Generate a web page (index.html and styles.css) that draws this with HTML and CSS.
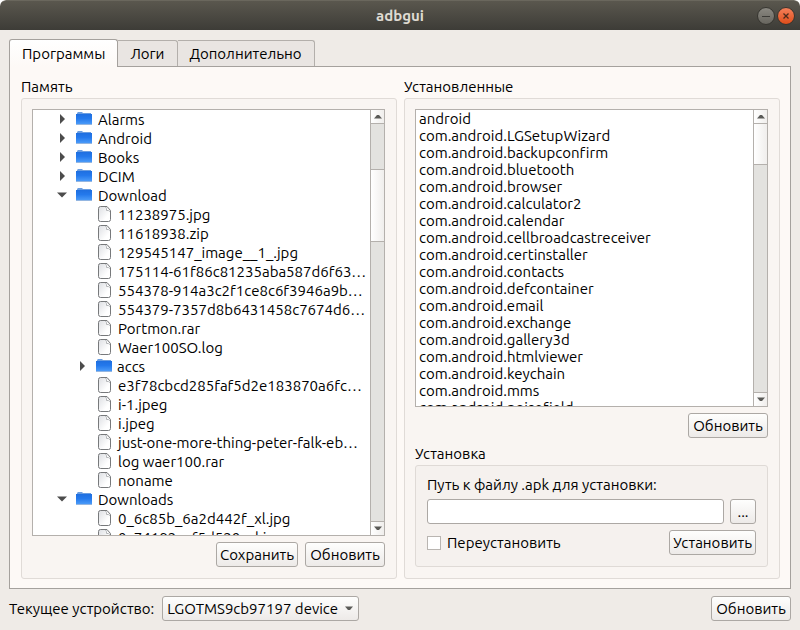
FILE: index.html
```
<!DOCTYPE html>
<html lang="ru">
<head>
<meta charset="utf-8">
<title>adbgui</title>
<link rel="stylesheet" href="styles.css">
</head>
<body>
<svg class="defs" aria-hidden="true">
  <defs>
    <linearGradient id="folder-fill" x1="0" y1="0" x2="0" y2="1"><stop offset="0" stop-color="#1f6fe0"/><stop offset=".45" stop-color="#2479ec"/><stop offset="1" stop-color="#4a9af8"/></linearGradient>
    <linearGradient id="file-fill" x1="0" y1="0" x2="1" y2="1"><stop offset="0" stop-color="#dcdee2"/><stop offset=".7" stop-color="#fff"/></linearGradient>
    <linearGradient id="close-fill" x1="0" y1="0" x2="0" y2="1"><stop offset="0" stop-color="#f4815c"/><stop offset="1" stop-color="#df4c18"/></linearGradient>
    <linearGradient id="min-fill" x1="0" y1="0" x2="0" y2="1"><stop offset="0" stop-color="#8b8982"/><stop offset="1" stop-color="#66645d"/></linearGradient>
    <symbol id="folder" viewBox="0 0 16 16"><path d="M1 3V2L2 1h4l1 1h8v1z" fill="#6a9de0"/><rect y="3" width="16" height="10" fill="url(#folder-fill)"/><path d="M0 13.500h16" stroke="#2b6fc4" opacity=".5"/></symbol>
    <symbol id="file" viewBox="0 0 16 16"><path d="M3.500.5h6.500l3.500 4v9q0 2-2 2h-8q-2 0-2-2v-11q0-2 2-2z" fill="url(#file-fill)" stroke="#77797b"/><path d="M8.500 1q1.500 1.500 1 3.500 2-.5 3.500 1" fill="#fff" stroke="#b4b6b9"/></symbol>
    <symbol id="closed" viewBox="0 0 10 10"><path d="M3 0v10l5-5z" fill="#4c4c4c"/></symbol>
    <symbol id="open" viewBox="0 0 10 10"><path d="M0 2.500h10L5 7.500z" fill="#4c4c4c"/></symbol>
    <symbol id="up" viewBox="0 0 8 5"><path d="M0 4.500 3 1h2l3 3.500z" fill="#5a5a57"/></symbol>
    <symbol id="down" viewBox="0 0 8 5"><path d="M0 .5 3 4h2l3-3.500z" fill="#5a5a57"/></symbol>
  </defs>
</svg>

<header class="titlebar">
  <h1>adbgui</h1>
  <div class="window-buttons">
    <button type="button" aria-label="Свернуть"><svg viewBox="0 0 18 18"><circle cx="9" cy="9" r="8.500" fill="url(#min-fill)" stroke="#35342f"/><path d="M5 9.500h8" stroke="#3c3b37"/></svg></button>
    <button type="button" aria-label="Закрыть"><svg viewBox="0 0 18 18"><circle cx="9" cy="9" r="8.500" fill="url(#close-fill)" stroke="#35342f"/><path d="m6.500 6.500 5 5m0-5-5 5" stroke="#4a2a1c" stroke-width="1.300"/></svg></button>
  </div>
</header>

<main class="content">
  <div class="tabs" role="tablist">
    <button type="button" class="tab active" role="tab" aria-selected="true">Программы</button>
    <button type="button" class="tab" role="tab" aria-selected="false">Логи</button>
    <button type="button" class="tab" role="tab" aria-selected="false">Дополнительно</button>
  </div>

  <div class="pane" role="tabpanel">
    <section class="group">
      <h2>Память</h2>
      <div class="box">
        <div class="view">
          <ul class="tree">
            <li><svg class="arrow"><use href="#closed"/></svg><svg class="icon"><use href="#folder"/></svg><span>Alarms</span></li>
            <li><svg class="arrow"><use href="#closed"/></svg><svg class="icon"><use href="#folder"/></svg><span>Android</span></li>
            <li><svg class="arrow"><use href="#closed"/></svg><svg class="icon"><use href="#folder"/></svg><span>Books</span></li>
            <li><svg class="arrow"><use href="#closed"/></svg><svg class="icon"><use href="#folder"/></svg><span>DCIM</span></li>
            <li><svg class="arrow"><use href="#open"/></svg><svg class="icon"><use href="#folder"/></svg><span>Download</span></li>
            <li class="child"><svg class="icon"><use href="#file"/></svg><span>11238975.jpg</span></li>
            <li class="child"><svg class="icon"><use href="#file"/></svg><span>11618938.zip</span></li>
            <li class="child"><svg class="icon"><use href="#file"/></svg><span>129545147_image__1_.jpg</span></li>
            <li class="child"><svg class="icon"><use href="#file"/></svg><span>175114-61f86c81235aba587d6f63…</span></li>
            <li class="child"><svg class="icon"><use href="#file"/></svg><span>554378-914a3c2f1ce8c6f3946a9b…</span></li>
            <li class="child"><svg class="icon"><use href="#file"/></svg><span>554379-7357d8b6431458c7674d6…</span></li>
            <li class="child"><svg class="icon"><use href="#file"/></svg><span>Portmon.rar</span></li>
            <li class="child"><svg class="icon"><use href="#file"/></svg><span>Waer100SO.log</span></li>
            <li class="child folder"><svg class="arrow"><use href="#closed"/></svg><svg class="icon"><use href="#folder"/></svg><span>accs</span></li>
            <li class="child"><svg class="icon"><use href="#file"/></svg><span>e3f78cbcd285faf5d2e183870a6fc…</span></li>
            <li class="child"><svg class="icon"><use href="#file"/></svg><span>i-1.jpeg</span></li>
            <li class="child"><svg class="icon"><use href="#file"/></svg><span>i.jpeg</span></li>
            <li class="child"><svg class="icon"><use href="#file"/></svg><span>just-one-more-thing-peter-falk-eb…</span></li>
            <li class="child"><svg class="icon"><use href="#file"/></svg><span>log waer100.rar</span></li>
            <li class="child"><svg class="icon"><use href="#file"/></svg><span>noname</span></li>
            <li><svg class="arrow"><use href="#open"/></svg><svg class="icon"><use href="#folder"/></svg><span>Downloads</span></li>
            <li class="child"><svg class="icon"><use href="#file"/></svg><span>0_6c85b_6a2d442f_xl.jpg</span></li>
            <li class="child"><svg class="icon"><use href="#file"/></svg><span>0_74182_ef5d520_xl.jpg</span></li>
          </ul>
          <div class="scrollbar tree-scroll">
            <button type="button" aria-label="Вверх"><svg><use href="#up"/></svg></button>
            <div class="before"></div><div class="thumb"></div><div class="after"></div>
            <button type="button" aria-label="Вниз"><svg><use href="#down"/></svg></button>
          </div>
        </div>
        <div class="actions">
          <button type="button" class="btn">Сохранить</button>
          <button type="button" class="btn">Обновить</button>
        </div>
      </div>
    </section>

    <section class="group">
      <h2>Установленные</h2>
      <div class="box">
        <div class="view">
          <ul class="packages">
            <li>android</li>
            <li>com.android.LGSetupWizard</li>
            <li>com.android.backupconfirm</li>
            <li>com.android.bluetooth</li>
            <li>com.android.browser</li>
            <li>com.android.calculator2</li>
            <li>com.android.calendar</li>
            <li>com.android.cellbroadcastreceiver</li>
            <li>com.android.certinstaller</li>
            <li>com.android.contacts</li>
            <li>com.android.defcontainer</li>
            <li>com.android.email</li>
            <li>com.android.exchange</li>
            <li>com.android.gallery3d</li>
            <li>com.android.htmlviewer</li>
            <li>com.android.keychain</li>
            <li>com.android.mms</li>
            <li>com.android.noisefield</li>
          </ul>
          <div class="scrollbar package-scroll">
            <button type="button" aria-label="Вверх"><svg><use href="#up"/></svg></button>
            <div class="thumb"></div><div class="after"></div>
            <button type="button" aria-label="Вниз"><svg><use href="#down"/></svg></button>
          </div>
        </div>
        <div class="actions">
          <button type="button" class="btn">Обновить</button>
        </div>
        <section class="install">
          <h2>Установка</h2>
          <form class="install-box">
            <label for="apk">Путь к файлу .apk для установки:</label>
            <div class="row">
              <input type="text" id="apk" class="path">
              <button type="button" class="btn browse">...</button>
            </div>
            <div class="row">
              <input type="checkbox" id="reinstall" class="check">
              <label for="reinstall" class="check-label">Переустановить</label>
              <button type="button" class="btn">Установить</button>
            </div>
          </form>
        </section>
      </div>
    </section>
  </div>
</main>

<footer class="device-bar">
  <label for="device">Текущее устройство:</label>
  <div class="select">
    <select id="device"><option>LGOTMS9cb97197 device</option></select>
    <svg aria-hidden="true"><use href="#down"/></svg>
  </div>
  <button type="button" class="btn">Обновить</button>
</footer>
</body>
</html>
```
FILE: styles.css
```
* { box-sizing: border-box; }

html { background: #fff; }

body {
  margin: 0;
  height: 100vh;
  display: flex;
  flex-direction: column;
  background: #efebe7;
  border-radius: 6px 6px 0 0;
  color: #000;
  font: 15px/17px Ubuntu, "Noto Sans", sans-serif;
  font-variant-ligatures: none;
}

button, input, select { font: inherit; color: inherit; margin: 0; }
h1, h2, ul { margin: 0; padding: 0; font-size: inherit; }
h2 { font-weight: normal; }
ul { list-style: none; }

.defs { position: absolute; width: 0; height: 0; }

.titlebar {
  flex: none;
  height: 30px;
  display: grid;
  grid-template-columns: 1fr auto 1fr;
  align-items: center;
  padding: 0 5px;
  background: linear-gradient(#5a574e, #3d3c37);
  border-top: 1px solid #6a675d;
  border-radius: 6px 6px 0 0;
  color: #dfdbd2;
}
.titlebar h1 { grid-column: 2; font-weight: bold; }
.window-buttons { display: flex; justify-content: flex-end; gap: 2px; }
.window-buttons button {
  width: 18px;
  height: 18px;
  padding: 0;
  border: 0;
  background: none;
}
.window-buttons svg { display: block; width: 18px; height: 18px; }

.content {
  flex: 1;
  min-height: 0;
  display: flex;
  flex-direction: column;
  padding: 9px 9px 0;
}

.tabs { display: flex; align-items: flex-end; }
.tab {
  height: 26px;
  padding: 0 12px;
  border: 1px solid #b3afab;
  border-left-width: 0;
  border-bottom: 0;
  border-radius: 0 3px 0 0;
  background: #e9e5e2;
}
.tab.active {
  position: relative;
  height: 28px;
  margin-bottom: -1px;
  border-left-width: 1px;
  border-color: #a5a19d;
  border-radius: 3px 3px 0 0;
  background: linear-gradient(#fff, #fdf9f6);
}

.pane {
  flex: 1;
  min-height: 0;
  display: grid;
  grid-template-columns: minmax(0, 1fr) minmax(0, 1fr);
  gap: 7px;
  padding: 11px 10px 9px 11px;
  border: 1px solid #a5a19d;
  background: #fdf9f6;
}

.group { display: flex; flex-direction: column; min-height: 0; }
.group h2 { height: 20px; }
.box {
  flex: 1;
  min-height: 0;
  display: flex;
  flex-direction: column;
  padding: 10px 11px 11px 10px;
  border: 1px solid #e0dbd7;
  border-radius: 3px;
  background: #f9f5f2;
}

.view {
  flex: 1 1 0;
  min-height: 0;
  display: flex;
  border: 1px solid #b4b0ac;
  background: #fff;
  overflow: hidden;
}
.view ul { flex: 1; min-width: 0; overflow: hidden; white-space: nowrap; }

.tree li {
  display: flex;
  align-items: center;
  height: 19px;
  padding-left: 24px;
}
.tree .child { padding-left: 64px; }
.tree .folder { padding-left: 44px; }
.tree .arrow { flex: none; width: 10px; height: 10px; margin: 0 9px 1px 0; }
.tree .icon { flex: none; width: 16px; height: 16px; margin: 0 6px 1px 0; }
.tree .child .icon { margin-right: 5px; }

.packages li { height: 17px; padding-left: 3px; }

.scrollbar {
  flex: none;
  width: 14px;
  display: flex;
  flex-direction: column;
  border-left: 1px solid #b4b0ac;
  background: #e3e2df;
}
.scrollbar button {
  flex: none;
  display: grid;
  place-items: center;
  height: 14px;
  padding: 0;
  border: 0 solid #b4b0ac;
  background: linear-gradient(90deg, #fff, #f0eeec);
}
.scrollbar button:first-child { border-bottom-width: 1px; }
.scrollbar button:last-child { border-top-width: 1px; }
.scrollbar svg { width: 8px; height: 5px; }
.thumb {
  border: solid #b4b0ac;
  border-width: 1px 0;
  background: linear-gradient(90deg, #fff, #f0eeec);
}
.tree-scroll .before { flex: 45; }
.tree-scroll .thumb { flex: 71; }
.tree-scroll .after { flex: 280; }
.package-scroll .thumb { flex: 40; border-top-width: 0; }
.package-scroll .after { flex: 228; }

.actions { display: flex; justify-content: flex-end; gap: 7px; margin-top: 6px; }

.btn {
  flex: none;
  min-width: 80px;
  height: 25px;
  padding: 0 3px;
  border: 1px solid #aca8a4;
  border-radius: 3px;
  background: linear-gradient(#fefefd, #edeae8);
}
.browse { min-width: 26px; }

.install { margin-top: 7px; }
.install-box {
  display: flex;
  flex-direction: column;
  gap: 6px;
  padding: 10px 11px 11px;
  border: 1px solid #dfdad6;
  border-radius: 3px;
  background: #f5f1ee;
}
.row { display: flex; align-items: center; gap: 6px; }
.path {
  flex: 1;
  min-width: 0;
  height: 25px;
  padding: 0 4px;
  border: 1px solid #aca8a4;
  border-radius: 3px;
  background: #fff;
}
.check {
  appearance: none;
  flex: none;
  width: 14px;
  height: 14px;
  border: 1px solid #b9b5b1;
  background: #fff;
}
.check-label { flex: 1; }

.device-bar {
  flex: none;
  display: flex;
  align-items: center;
  gap: 8px;
  padding: 7px 9px 9px;
}
.device-bar .btn { margin-left: auto; }
.select { position: relative; }
.select select {
  appearance: none;
  display: block;
  height: 25px;
  padding: 0 20px 0 4px;
  border: 1px solid #aca8a4;
  border-radius: 3px;
  background: linear-gradient(#fefefd, #edeae8);
}
.select svg {
  position: absolute;
  top: 10px;
  right: 6px;
  width: 8px;
  height: 5px;
  pointer-events: none;
}
```
